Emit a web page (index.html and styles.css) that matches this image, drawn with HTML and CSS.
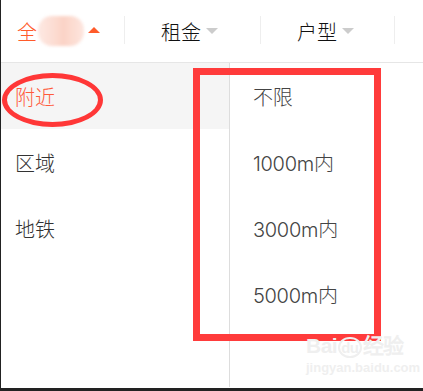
FILE: index.html
```html
<!DOCTYPE html>
<html lang="zh-CN">
<head>
    <meta charset="UTF-8">
    <title>找房筛选</title>
    <link rel="stylesheet" href="styles.css">
</head>
<body>
<div class="screen">

    <div class="tabs">
        <div class="tab tab-first active">
            <span>全</span><span class="blur"></span><i class="arrow up"></i>
        </div>
        <div class="tab"><span>租金</span><i class="arrow"></i></div>
        <div class="tab"><span>户型</span><i class="arrow"></i></div>
        <div class="tab tab-last"></div>
    </div>

    <div class="panel">
        <ul class="menu">
            <li class="selected">附近</li>
            <li>区域</li>
            <li>地铁</li>
        </ul>
        <ul class="options">
            <li>不限</li>
            <li>1000m内</li>
            <li>3000m内</li>
            <li>5000m内</li>
        </ul>
    </div>

    <!-- annotations drawn over the screenshot -->
    <div class="mark-ellipse"></div>
    <div class="mark-box"></div>

    <div class="watermark">
        <div class="wm-top">Bai<span class="paw">du</span>经验</div>
        <div class="wm-url">jingyan.baidu.com</div>
    </div>

</div>
</body>
</html>
```

FILE: styles.css
```css
* {
    box-sizing: border-box;
}

html, body {
    margin: 0;
    padding: 0;
    background: #fff;
}

body {
    font-family: "Inter", "Noto Sans CJK SC", sans-serif;
    font-weight: 300;
    color: #333;
}

.screen {
    position: relative;
    width: 423px;
    height: 391px;
    border-left: 1px solid #222;
    border-bottom: 3px solid #222;
    overflow: hidden;
}

.tabs {
    display: flex;
    height: 63px;
    border-bottom: 1px solid #e6e6e6;
}

.tab {
    display: flex;
    align-items: center;
    height: 100%;
    font-size: 20px;
    color: #111;
    position: relative;
}

.tab::after {
    content: "";
    position: absolute;
    right: 0;
    top: 16px;
    height: 28px;
    width: 1px;
    background: #eee;
}

.tab-first {
    width: 124px;
    padding-left: 16px;
}

.tab:nth-child(2),
.tab:nth-child(3) {
    width: 136px;
    padding-left: 36px;
}

.tab:nth-child(3) {
    width: 134px;
}

.tab-last {
    flex: 1;
}

.tab-last::after {
    display: none;
}

.tab.active {
    color: #ff5b2a;
}

.blur {
    display: inline-block;
    width: 46px;
    height: 30px;
    margin: 0 4px 0 1px;
    border-radius: 14px;
    background: linear-gradient(90deg, #fde9e3 0%, #fcdcd2 35%, #fbd3c6 55%, #fde6df 100%);
    filter: blur(1.5px);
}

.arrow {
    display: inline-block;
    width: 0;
    height: 0;
    margin-left: 5px;
    border-left: 6px solid transparent;
    border-right: 6px solid transparent;
    border-top: 6px solid #ccc;
}

.arrow.up {
    border-top: none;
    border-bottom: 6px solid #ff5b2a;
    margin-left: 0;
    margin-top: -2px;
}

.panel {
    display: flex;
    height: 324px;
}

.menu,
.options {
    list-style: none;
    margin: 0;
    padding: 0;
}

.menu {
    width: 229px;
    border-right: 1px solid #ddd;
}

.menu li,
.options li {
    height: 66px;
    display: flex;
    align-items: center;
    font-size: 20px;
}

.menu li {
    padding-left: 14px;
}

.menu li.selected {
    background: #f5f5f5;
    color: #ff5a3c;
}

.options {
    flex: 1;
}

.options li {
    padding-left: 23px;
    color: #444;
    letter-spacing: -0.3px;
}

.mark-ellipse {
    position: absolute;
    left: 1px;
    top: 73px;
    width: 101px;
    height: 54px;
    border: 5px solid #ff3737;
    border-radius: 50%;
}

.mark-box {
    position: absolute;
    left: 192px;
    top: 68px;
    width: 188px;
    height: 273px;
    border: 7px solid #ff3b3b;
}

.watermark {
    position: absolute;
    left: 305px;
    top: 333px;
    color: #efefef;
    font-family: "Liberation Sans", sans-serif;
    font-weight: bold;
}

.wm-top {
    font-size: 21px;
    line-height: 26px;
    letter-spacing: -0.5px;
}

.paw {
    display: inline-block;
    font-size: 15px;
    border: 2px solid #efefef;
    border-radius: 50%;
    padding: 0 1px;
    margin: 0 1px;
    line-height: 17px;
}

.wm-url {
    font-size: 13px;
    line-height: 18px;
}
```
